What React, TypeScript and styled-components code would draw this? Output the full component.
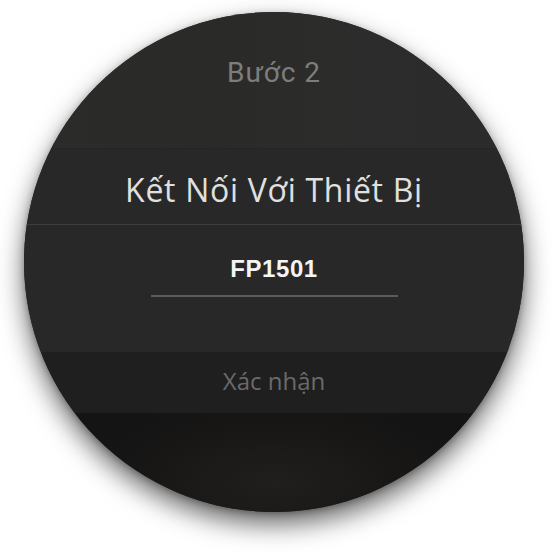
import React from "react";
import styled, { createGlobalStyle } from "styled-components";

const Global = createGlobalStyle`
  html, body { margin: 0; padding: 0; background: #ffffff; }
  #root { width: 552px; height: 552px; }
`;

const Stage = styled.div`
  width: 552px;
  height: 552px;
  box-sizing: border-box;
  padding: 12px 0 0 24px;
  background: #ffffff;
`;

const Watch = styled.div`
  width: 500px;
  height: 500px;
  border-radius: 50%;
  overflow: hidden;
  display: flex;
  flex-direction: column;
  background: #2a2a29;
  box-shadow: 0 12px 26px rgba(0, 0, 0, 0.6), 0 2px 6px rgba(0, 0, 0, 0.25);
`;

const Header = styled.div`
  height: 136px;
  box-sizing: border-box;
  padding-top: 47px;
  display: flex;
  justify-content: center;
  background: linear-gradient(90deg, #2b2b2a 0%, #2a2b29 40%, #2c2c2b 60%, #2b2b2b 100%);
`;

const StepLabel = styled.div`
  font-family: Roboto, "Liberation Sans", sans-serif;
  font-size: 28px;
  line-height: 1;
  color: #7d7d7d;
  letter-spacing: 1px;
`;

const TitleBand = styled.div`
  height: 77px;
  box-sizing: border-box;
  padding-top: 25px;
  display: flex;
  justify-content: center;
  background: #282828;
  border-top: 1px solid #252525;
  border-bottom: 1px solid #3d3d3d;
`;

const Title = styled.div`
  font-family: "Open Sans", "Noto Sans", sans-serif;
  font-size: 32px;
  font-weight: 500;
  line-height: 1;
  color: #e0e0e0;
  letter-spacing: 0.7px;
  white-space: nowrap;
`;

const InputBand = styled.div`
  height: 127px;
  box-sizing: border-box;
  padding-top: 32px;
  display: flex;
  justify-content: center;
  align-items: flex-start;
  background: #282828;
`;

const Field = styled.div`
  width: 247px;
  padding-bottom: 14px;
  border-bottom: 2px solid #5a5a5a;
  text-align: center;
  font-family: "Liberation Sans", Arial, sans-serif;
  font-weight: 700;
  font-size: 24px;
  line-height: 1;
  color: #f4f4f4;
  letter-spacing: 0.6px;
`;

const ButtonBand = styled.div`
  height: 61px;
  box-sizing: border-box;
  padding-top: 17px;
  display: flex;
  justify-content: center;
  background: #1f1f1f;
`;

const ConfirmLabel = styled.div`
  font-family: "Open Sans", "Noto Sans", sans-serif;
  font-size: 24px;
  line-height: 1;
  color: #6a6a6a;
`;

const Footer = styled.div`
  flex: 1;
  background: radial-gradient(ellipse 40% 90% at 50% 70%, #201f1d 0%, #181716 60%, #151414 100%);
`;

export default function App() {
  return (
    <>
      <Global />
      <Stage>
        <Watch>
          <Header>
            <StepLabel>Bước 2</StepLabel>
          </Header>
          <TitleBand>
            <Title>Kết Nối Với Thiết Bị</Title>
          </TitleBand>
          <InputBand>
            <Field>FP1501</Field>
          </InputBand>
          <ButtonBand>
            <ConfirmLabel>Xác nhận</ConfirmLabel>
          </ButtonBand>
          <Footer />
        </Watch>
      </Stage>
    </>
  );
}
